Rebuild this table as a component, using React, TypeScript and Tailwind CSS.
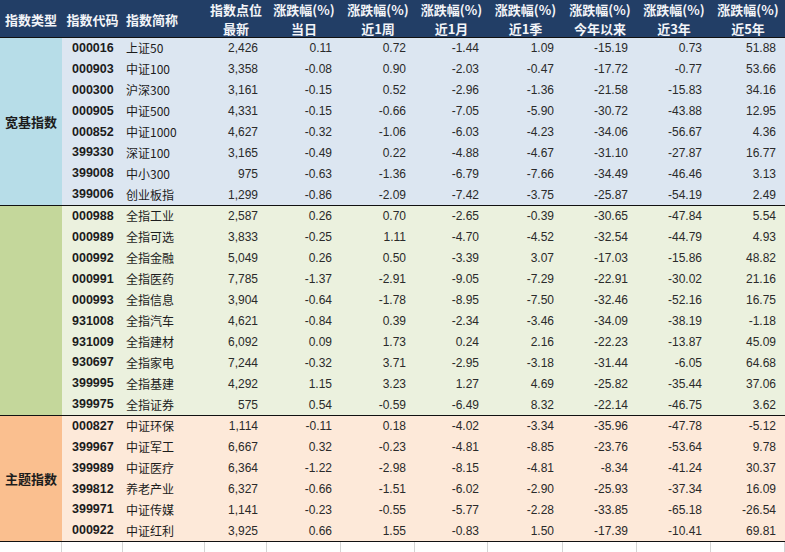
import React from "react";

type Row = [string, string, string, ...string[]];

const sections: {
  label: string;
  typeBg: string;
  dataBg: string;
  rows: Row[];
}[] = [
  {
    label: "宽基指数",
    typeBg: "bg-[#b7dde8]",
    dataBg: "bg-[#dce6f1]",
    rows: [
      ["000016", "上证50", "2,426", "0.11", "0.72", "-1.44", "1.09", "-15.19", "0.73", "51.88"],
      ["000903", "中证100", "3,358", "-0.08", "0.90", "-2.03", "-0.47", "-17.72", "-0.77", "53.66"],
      ["000300", "沪深300", "3,161", "-0.15", "0.52", "-2.96", "-1.36", "-21.58", "-15.83", "34.16"],
      ["000905", "中证500", "4,331", "-0.15", "-0.66", "-7.05", "-5.90", "-30.72", "-43.88", "12.95"],
      ["000852", "中证1000", "4,627", "-0.32", "-1.06", "-6.03", "-4.23", "-34.06", "-56.67", "4.36"],
      ["399330", "深证100", "3,165", "-0.49", "0.22", "-4.88", "-4.67", "-31.10", "-27.87", "16.77"],
      ["399008", "中小300", "975", "-0.63", "-1.36", "-6.79", "-7.66", "-34.49", "-46.46", "3.13"],
      ["399006", "创业板指", "1,299", "-0.86", "-2.09", "-7.42", "-3.75", "-25.87", "-54.19", "2.49"],
    ],
  },
  {
    label: "",
    typeBg: "bg-[#c4d79b]",
    dataBg: "bg-[#ebf1de]",
    rows: [
      ["000988", "全指工业", "2,587", "0.26", "0.70", "-2.65", "-0.39", "-30.65", "-47.84", "5.54"],
      ["000989", "全指可选", "3,833", "-0.25", "1.11", "-4.70", "-4.52", "-32.54", "-44.79", "4.93"],
      ["000992", "全指金融", "5,049", "0.26", "0.50", "-3.39", "3.07", "-17.03", "-15.86", "48.82"],
      ["000991", "全指医药", "7,785", "-1.37", "-2.91", "-9.05", "-7.29", "-22.91", "-30.02", "21.16"],
      ["000993", "全指信息", "3,904", "-0.64", "-1.78", "-8.95", "-7.50", "-32.46", "-52.16", "16.75"],
      ["931008", "全指汽车", "4,621", "-0.84", "0.39", "-2.34", "-3.46", "-34.09", "-38.19", "-1.18"],
      ["931009", "全指建材", "6,092", "0.09", "1.73", "0.24", "2.16", "-22.23", "-13.87", "45.09"],
      ["930697", "全指家电", "7,244", "-0.32", "3.71", "-2.95", "-3.18", "-31.44", "-6.05", "64.68"],
      ["399995", "全指基建", "4,292", "1.15", "3.23", "1.27", "4.69", "-25.82", "-35.44", "37.06"],
      ["399975", "全指证券", "575", "0.54", "-0.59", "-6.49", "8.32", "-22.14", "-46.75", "3.62"],
    ],
  },
  {
    label: "主题指数",
    typeBg: "bg-[#fabf8f]",
    dataBg: "bg-[#fde9d9]",
    rows: [
      ["000827", "中证环保", "1,114", "-0.11", "0.18", "-4.02", "-3.34", "-35.96", "-47.78", "-5.12"],
      ["399967", "中证军工", "6,667", "0.32", "-0.23", "-4.81", "-8.85", "-23.76", "-53.64", "9.78"],
      ["399989", "中证医疗", "6,364", "-1.22", "-2.98", "-8.15", "-4.81", "-8.34", "-41.24", "30.37"],
      ["399812", "养老产业", "6,327", "-0.66", "-1.51", "-6.02", "-2.90", "-25.93", "-37.34", "16.09"],
      ["399971", "中证传媒", "1,141", "-0.23", "-0.55", "-5.77", "-2.28", "-33.85", "-65.18", "-26.54"],
      ["000922", "中证红利", "3,925", "0.66", "1.55", "-0.83", "1.50", "-17.39", "-10.41", "69.81"],
    ],
  },
];

const periods = ["当日", "近1周", "近1月", "近1季", "今年以来", "近3年", "近5年"];

const cjk = "font-['Noto_Sans_CJK_SC',sans-serif]";
const num = "font-['Liberation_Sans','Noto_Sans_CJK_SC',sans-serif]";
const fullCols = "grid-cols-[62px_61px_82px_62px_74px_74px_73px_75px_74px_74px_74px]";
const dataCols = "grid-cols-[61px_82px_62px_74px_74px_73px_75px_74px_74px_74px]";

export default function App() {
  return (
    <div className="w-[785px] h-[552px] overflow-hidden bg-white text-[#1c1c1c]">
      {/* header */}
      <div className={`grid ${fullCols} h-[38px] bg-[#223e66] border-b border-[#111] text-[#f2f4f8] font-bold text-[13px] leading-[19px] ${cjk}`}>
        <div className="flex items-center justify-center">指数类型</div>
        <div className="flex items-center justify-center">指数代码</div>
        <div className="flex items-center pl-[3px]">指数简称</div>
        <div className="flex flex-col items-center justify-center">
          <span>指数点位</span>
          <span>最新</span>
        </div>
        {periods.map((p) => (
          <div key={p} className="flex flex-col items-center justify-center">
            <span>涨跌幅(%)</span>
            <span>{p}</span>
          </div>
        ))}
      </div>

      {sections.map((s, i) => (
        <div
          key={i}
          className="flex border-b border-[#111]"
          style={{ height: s.rows.length * 21 }}
        >
          <div className={`w-[62px] shrink-0 ${s.typeBg} flex items-center pl-[5px] font-bold text-[13px] ${cjk}`}>
            {s.label}
          </div>
          <div className={`flex-1 flex flex-col ${s.dataBg}`}>
            {s.rows.map((r) => (
              <div key={r[0]} className={`grid ${dataCols} flex-1 items-center text-[12px]`}>
                <div className={`pl-[10px] font-bold ${num} text-[12.5px]`}>{r[0]}</div>
                <div className={`pl-[3px] ${cjk}`}>{r[1]}</div>
                {r.slice(2).map((v, j) => (
                  <div key={j} className={`text-right pr-[9px] ${num} text-[#2a2a2a]`}>
                    {v}
                  </div>
                ))}
              </div>
            ))}
          </div>
        </div>
      ))}

      {/* empty spreadsheet row */}
      <div className={`grid ${fullCols} h-[12px]`}>
        {Array.from({ length: 11 }).map((_, i) => (
          <div key={i} className="border-r border-[#d4d4d4]" />
        ))}
      </div>
    </div>
  );
}
